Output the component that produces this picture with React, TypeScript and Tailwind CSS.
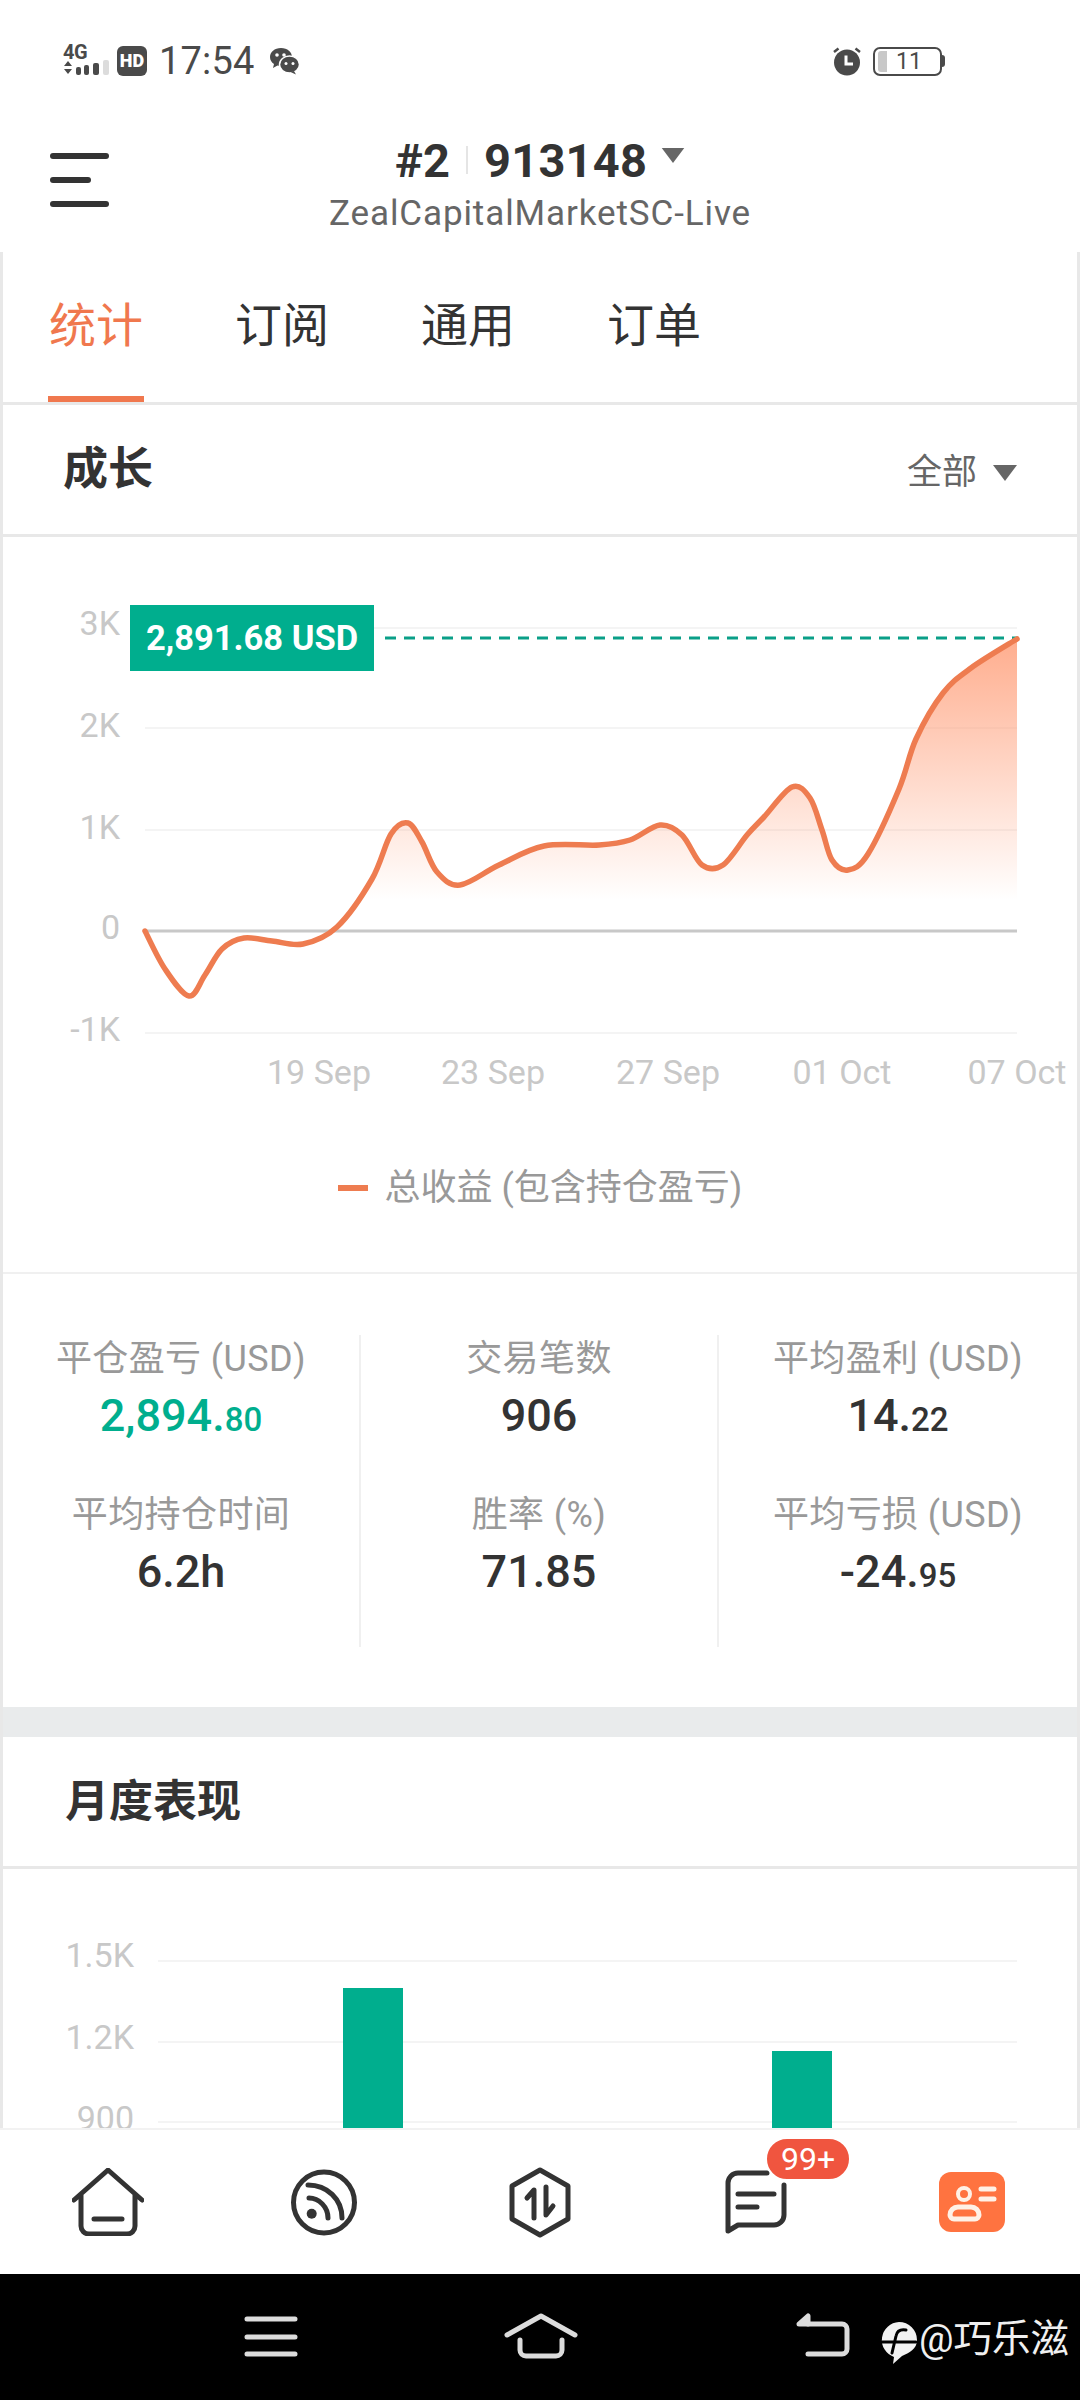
const points: [number, number][] = [
  [145, 931], [165, 969], [189, 996], [205, 975], [222, 949], [244, 938], [272, 941], [303, 944],
  [337, 927], [372, 879], [391, 834], [408, 823], [422, 842], [437, 872], [460, 885], [499, 865],
  [544, 846], [599, 845], [630, 840], [660, 825], [682, 835], [702, 865], [723, 865], [747, 835],
  [764, 817], [792, 787], [810, 798], [822, 830], [832, 860], [848, 870], [868, 854], [899, 789], [916, 739],
  [943, 693], [971, 668], [1017, 639],
];

// catmull-rom through the sampled points
function smooth(pts: [number, number][]) {
  let d = `M${pts[0][0]} ${pts[0][1]}`;
  for (let i = 0; i < pts.length - 1; i++) {
    const p0 = pts[Math.max(i - 1, 0)];
    const p1 = pts[i];
    const p2 = pts[i + 1];
    const p3 = pts[Math.min(i + 2, pts.length - 1)];
    const c1x = p1[0] + (p2[0] - p0[0]) / 6;
    const c1y = p1[1] + (p2[1] - p0[1]) / 6;
    const c2x = p2[0] - (p3[0] - p1[0]) / 6;
    const c2y = p2[1] - (p3[1] - p1[1]) / 6;
    d += ` C${c1x.toFixed(1)} ${c1y.toFixed(1)} ${c2x.toFixed(1)} ${c2y.toFixed(1)} ${p2[0]} ${p2[1]}`;
  }
  return d;
}

function Triangle({ className }: { className: string }) {
  return (
    <svg className={className} viewBox="0 0 24 16">
      <path d="M0 0H24L12 16Z" fill="#666" />
    </svg>
  );
}

function StatusBar() {
  return (
    <div className="flex h-[100px] items-start justify-between pt-[46px] pl-[63px] pr-[135px] text-[#4a4a4a]">
      <div className="flex items-center">
        <div className="relative h-[30px] w-[46px]">
          <span className="absolute left-0 -top-[3px] text-[20px] font-bold leading-[18px] tracking-[-0.5px]">4G</span>
          <svg className="absolute left-0 top-[14px]" width="46" height="16" viewBox="0 0 46 16">
            <path d="M1 6L5 1L9 6ZM1 9L5 14L9 9Z" fill="#4a4a4a" />
            <rect x="13" y="7" width="5" height="8" rx="2" fill="#4a4a4a" />
            <rect x="21" y="5" width="5" height="10" rx="2" fill="#4a4a4a" />
            <rect x="30" y="3" width="6" height="12" rx="2" fill="#4a4a4a" />
            <rect x="40" y="0" width="6" height="15" rx="2" fill="#dcdcdc" />
          </svg>
        </div>
        <div className="ml-[8px] flex h-[30px] w-[30px] items-center justify-center rounded-[6px] bg-[#4a4a4a] text-[18px] font-black leading-none text-white">HD</div>
        <span className="ml-[12px] text-[38px] leading-[30px] tracking-[0.2px]">17:54</span>
        <svg className="ml-[14px]" width="31" height="28" viewBox="0 0 31 28">
          <path d="M12 1C5.500 1 1 5 1 10c0 3 1.600 5.400 4 7l-1 4 4.500-2.400c1 .3 2.200.4 3.500.4 6.500 0 11-4 11-9S18.500 1 12 1Z" fill="#4a4a4a" />
          <ellipse cx="20.500" cy="17.500" rx="10" ry="8.500" fill="#4a4a4a" stroke="#fff" strokeWidth="1.500" />
          <path d="M25 24l2 3.500-5.500-2.500Z" fill="#4a4a4a" />
          <circle cx="8" cy="8" r="1.800" fill="#fff" />
          <circle cx="15" cy="8" r="1.800" fill="#fff" />
          <circle cx="17" cy="16.500" r="1.500" fill="#fff" />
          <circle cx="24" cy="16.500" r="1.500" fill="#fff" />
        </svg>
      </div>
      <div className="flex items-center gap-[11px]">
        <svg width="30" height="30" viewBox="0 0 30 30">
          <circle cx="15" cy="16.500" r="13" fill="#4a4a4a" />
          <path d="M2 6L6.500 2.500M28 6L23.500 2.500" stroke="#4a4a4a" strokeWidth="2.500" />
          <path d="M14 9.500V18H21" stroke="#fff" strokeWidth="3" fill="none" />
        </svg>
        <div className="flex items-center">
          <div className="flex h-[29px] w-[69px] items-center rounded-[7px] border-[2px] border-[#4a4a4a] pl-[3px]">
            <div className="h-[21px] w-[9px] rounded-l-[3px] bg-[#c8c8c8]" />
            <span className="ml-[9px] text-[23px] leading-none">11</span>
          </div>
          <div className="h-[12px] w-[3px] rounded-r-[3px] bg-[#4a4a4a]" />
        </div>
      </div>
    </div>
  );
}

function Header() {
  return (
    <div className="relative flex h-[152px] flex-col items-center">
      <div className="absolute left-[50px] top-[53px] flex flex-col gap-[18px]">
        <div className="h-[6px] w-[59px] rounded-full bg-[#333]" />
        <div className="h-[6px] w-[41px] rounded-full bg-[#333]" />
        <div className="h-[6px] w-[59px] rounded-full bg-[#333]" />
      </div>
      <div className="mt-[31px] flex h-[58px] items-center text-[47px] font-bold leading-none tracking-[0.2px] text-[#333]">
        <span>#2</span>
        <div className="mx-[16px] h-[28px] w-[2px] bg-[#e5e5e5]" />
        <span>913148</span>
        <Triangle className="ml-[14px] mb-[10px] h-[15px] w-[24px]" />
      </div>
      <div className="mt-[3px] text-[35px] leading-[44px] tracking-[0.9px] text-[#666]">ZealCapitalMarketSC-Live</div>
    </div>
  );
}

const tabs = ["统计", "订阅", "通用", "订单"];

function Tabs() {
  return (
    <div className="flex h-[153px] gap-[90px] border-b-[3px] border-[#e8e8e8] pl-[45px]">
      {tabs.map((t, i) => (
        <div
          key={t}
          className={`flex h-[150px] w-[96px] items-center justify-center border-b-[6px] pt-[2px] text-[47px] leading-none ${
            i === 0 ? "border-[#f0784e] text-[#f0784e]" : "border-transparent text-[#333]"
          }`}
        >
          {t}
        </div>
      ))}
    </div>
  );
}

function GrowthChart() {
  const line = smooth(points);
  const grid = [628, 728, 830, 1033];
  const yLabels: [string, number][] = [["3K", 623], ["2K", 725], ["1K", 827], ["0", 927], ["-1K", 1029]];
  const xLabels: [string, number][] = [["19 Sep", 319], ["23 Sep", 493], ["27 Sep", 668], ["01 Oct", 842], ["07 Oct", 1017]];
  return (
    <svg className="block h-[560px] w-[1074px]" viewBox="3 537 1074 560">
      <defs>
        <linearGradient id="area" x1="0" y1="639" x2="0" y2="900" gradientUnits="userSpaceOnUse">
          <stop offset="0" stopColor="#ff9f7a" stopOpacity="0.85" />
          <stop offset="1" stopColor="#ff9f7a" stopOpacity="0" />
        </linearGradient>
      </defs>
      {grid.map((y) => (
        <line key={y} x1="145" x2="1017" y1={y} y2={y} stroke="#f4f4f4" strokeWidth="2" />
      ))}
      <path d={`${line} L1017 931 L145 931 Z`} fill="url(#area)" />
      <line x1="145" x2="1017" y1="931" y2="931" stroke="#c8c8c8" strokeWidth="3" />
      <line x1="385" x2="1017" y1="638" y2="638" stroke="#0a9f88" strokeWidth="3" strokeDasharray="11 8" />
      <path d={line} fill="none" stroke="#ee7c50" strokeWidth="5.500" strokeLinejoin="round" strokeLinecap="round" />
      {yLabels.map(([t, y]) => (
        <text key={t} x="120" y={y + 12} textAnchor="end" fill="#c8c8c8" fontSize="34">{t}</text>
      ))}
      {xLabels.map(([t, x]) => (
        <text key={t} x={x} y="1084" textAnchor="middle" fill="#c8c8c8" fontSize="34">{t}</text>
      ))}
      <rect x="130" y="605" width="244" height="66" fill="#00ae8e" />
      <text x="252" y="650" textAnchor="middle" fill="#fff" fontSize="34.500" fontWeight="700">2,891.68 USD</text>
    </svg>
  );
}

type Stat = { label: string; value: string; cents?: string; green?: boolean };

const statCols: Stat[][] = [
  [
    { label: "平仓盈亏 (USD)", value: "2,894.", cents: "80", green: true },
    { label: "平均持仓时间", value: "6.2h" },
  ],
  [
    { label: "交易笔数", value: "906" },
    { label: "胜率 (%)", value: "71.85" },
  ],
  [
    { label: "平均盈利 (USD)", value: "14.", cents: "22" },
    { label: "平均亏损 (USD)", value: "-24.", cents: "95" },
  ],
];

function StatBlock({ stat }: { stat: Stat }) {
  return (
    <div className="flex flex-col items-center">
      <div className="h-[48px] text-[36px] leading-[48px] tracking-[0.4px] text-[#999]">{stat.label}</div>
      <div className={`flex h-[66px] items-baseline text-[45px] font-medium leading-[66px] ${stat.green ? "text-[#00ae8e]" : "text-[#333]"}`}>
        {stat.value}
        {stat.cents && <span className="text-[33px]">{stat.cents}</span>}
      </div>
    </div>
  );
}

function Stats() {
  return (
    <div className="h-[435px] border-t-[2px] border-[#f0f0f0] pt-[61px]">
      <div className="grid h-[312px] grid-cols-3">
        {statCols.map((col, i) => (
          <div key={i} className={`flex flex-col gap-[42px] ${i < 2 ? "border-r-[2px] border-[#f0f0f0]" : ""}`}>
            {col.map((s) => (
              <StatBlock key={s.label} stat={s} />
            ))}
          </div>
        ))}
      </div>
    </div>
  );
}

function MonthlyChart() {
  const grid = [1961, 2042, 2122];
  const labels: [string, number][] = [["1.5K", 1955], ["1.2K", 2037], ["900", 2118]];
  return (
    <svg className="block h-[259px] w-[1074px]" viewBox="3 1869 1074 259">
      {grid.map((y) => (
        <line key={y} x1="158" x2="1017" y1={y} y2={y} stroke="#f4f4f4" strokeWidth="2" />
      ))}
      {labels.map(([t, y]) => (
        <text key={t} x="134" y={y + 12} textAnchor="end" fill="#c8c8c8" fontSize="34">{t}</text>
      ))}
      <rect x="343" y="1988" width="60" height="140" fill="#00ae8e" />
      <rect x="772" y="2051" width="60" height="77" fill="#00ae8e" />
    </svg>
  );
}

function BottomNav() {
  return (
    <div className="grid h-[146px] grid-cols-5 border-t-[2px] border-[#f2f2f2] bg-white">
      <div className="flex items-center justify-center">
        <svg width="72" height="68" viewBox="0 0 72 68" fill="none" stroke="#333" strokeWidth="5" strokeLinecap="round" strokeLinejoin="round">
          <path d="M2 32L36 2L70 32M9 26V58a8 8 0 0 0 8 8H55a8 8 0 0 0 8-8V26M22 51H50" />
        </svg>
      </div>
      <div className="flex items-center justify-center">
        <svg width="66" height="67" viewBox="0 0 66 67" fill="none" stroke="#333" strokeWidth="5" strokeLinecap="round">
          <circle cx="33" cy="33.500" r="30.500" />
          <path d="M18 29C28 29 37 38 37 49" />
          <path d="M17 16C36 16 51 30 51 49" />
          <circle cx="20.700" cy="44.700" r="5" fill="#333" stroke="none" />
        </svg>
      </div>
      <div className="flex items-center justify-center">
        <svg width="64" height="71" viewBox="0 0 64 71" fill="none" stroke="#333" strokeWidth="5" strokeLinecap="round" strokeLinejoin="round">
          <path d="M32 3L60 19V52L32 68L4 52V19Z" />
          <path d="M26 51V23L19 31M38 20V48L45 39" />
        </svg>
      </div>
      <div className="relative flex items-center justify-center">
        <svg width="62" height="65" viewBox="0 0 62 65" fill="none" stroke="#333" strokeWidth="5" strokeLinecap="round" strokeLinejoin="round">
          <path d="M42 3H13a10 10 0 0 0-10 10V61L13 55H49a10 10 0 0 0 10-10V15" />
          <path d="M13 24H49M13 37H32" />
        </svg>
        <div className="absolute left-[117px] top-[7px] flex h-[44px] w-[86px] items-center justify-center rounded-full border-[2px] border-white bg-[#f0553f] text-[32px] leading-none text-white">99+</div>
      </div>
      <div className="flex items-center justify-center">
        <div className="flex h-[60px] w-[66px] items-center justify-center rounded-[12px] bg-[#ff7340]">
          <svg width="66" height="60" viewBox="0 0 66 60" fill="none" stroke="#fff1e6" strokeLinecap="round">
            <circle cx="25" cy="22" r="6" strokeWidth="4" />
            <path d="M15 47H36a4 4 0 0 0 4-4a8 8 0 0 0-8-8H19a8 8 0 0 0-8 8a4 4 0 0 0 4 4Z" strokeWidth="5" />
            <path d="M42 17H55M42 27H55" strokeWidth="5" />
          </svg>
        </div>
      </div>
    </div>
  );
}

function SystemBar() {
  return (
    <div className="relative h-[126px] bg-black">
      <svg className="block" width="1080" height="126" viewBox="0 2274 1080 126" fill="none" stroke="#dcdcdc" strokeWidth="5" strokeLinecap="round" strokeLinejoin="round">
        <path d="M247 2319H295M247 2337H295M247 2354H295" />
        <path d="M507 2335L541 2316L575 2335M520 2340V2350a6 6 0 0 0 6 6H556a6 6 0 0 0 6-6V2340" />
        <path d="M808 2324H842a5 5 0 0 1 5 5V2349a5 5 0 0 1-5 5H808" />
        <path d="M799 2324L808 2316V2324Z" fill="#dcdcdc" />
        <path d="M899 2322a18 18 0 0 1 18 18c0 9-8 13-15 16l-9 8l1-7a18 18 0 0 1 5-35Z" fill="#f2f2f2" stroke="none" />
        <path d="M906 2330c-6-1-9 1-10 6L892 2353M882 2342H916" stroke="#000" strokeWidth="3" />
      </svg>
      <span className="absolute left-[919px] top-[41px] text-[38.500px] leading-[48px] text-[#f0f0f0]">@巧乐滋</span>
    </div>
  );
}

export default function App() {
  return (
    <div className="flex h-[2400px] w-[1080px] flex-col overflow-hidden bg-white font-['Roboto','Noto_Sans_CJK_SC',sans-serif]">
      <StatusBar />
      <Header />
      <div className="h-[1876px] overflow-hidden border-x-[3px] border-[#e8e8e8]">
        <Tabs />
        <div className="flex h-[132px] items-center justify-between border-b-[3px] border-[#e8e8e8] pl-[60px] pr-[60px]">
          <span className="text-[45px] font-bold leading-none text-[#333]">成长</span>
          <div className="flex items-center gap-[16px] pt-[6px] text-[35px] leading-none text-[#666]">
            全部
            <Triangle className="h-[16px] w-[24px]" />
          </div>
        </div>
        <GrowthChart />
        <div className="flex h-[175px] items-center justify-center gap-[17px] pt-[7px]">
          <div className="h-[6px] w-[30px] bg-[#ee7c50]" />
          <span className="text-[36px] leading-none text-[#999]">总收益 (包含持仓盈亏)</span>
        </div>
        <Stats />
        <div className="h-[30px] bg-[#e9ebec]" />
        <div className="flex h-[132px] items-center border-b-[3px] border-[#e8e8e8] pl-[62px]">
          <span className="text-[44px] font-bold leading-none text-[#333]">月度表现</span>
        </div>
        <MonthlyChart />
      </div>
      <BottomNav />
      <SystemBar />
    </div>
  );
}
